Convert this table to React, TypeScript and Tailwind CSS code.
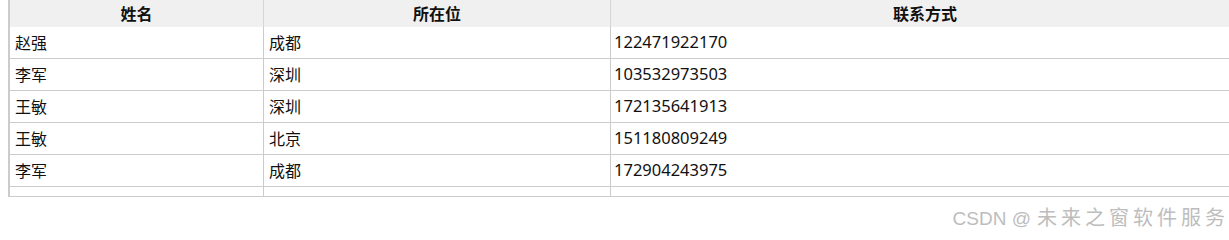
const rows = [
  { name: '赵强', city: '成都', phone: '122471922170' },
  { name: '李军', city: '深圳', phone: '103532973503' },
  { name: '王敏', city: '深圳', phone: '172135641913' },
  { name: '王敏', city: '北京', phone: '151180809249' },
  { name: '李军', city: '成都', phone: '172904243975' },
];

const font = 'font-["Noto_Sans","Noto_Sans_CJK_SC",sans-serif]';

export default function App() {
  return (
    <div className={`relative h-[240px] w-[1229px] overflow-hidden bg-white text-[16px] text-[#111] ${font}`}>
      <div className="ml-2 w-[1260px] border-b border-l-2 border-[#cccccc]">
        {/* header */}
        <div className="flex h-[27px] items-center bg-[#f0f0f0] font-semibold">
          <div className="flex h-full w-[254px] items-center justify-center border-r border-[#d6d6d6]">姓名</div>
          <div className="flex h-full w-[347px] items-center justify-center border-r border-[#d6d6d6]">所在位</div>
          <div className="flex h-full w-[628px] items-center justify-center">联系方式</div>
        </div>
        {rows.map((r, i) => (
          <div key={i} className="flex h-[32px] border-b border-[#cccccc]">
            <div className="flex w-[254px] items-center border-r border-[#cccccc] px-[5px]">{r.name}</div>
            <div className="flex w-[347px] items-center border-r border-[#cccccc] px-[5px]">{r.city}</div>
            <div className="flex flex-1 items-center px-[3px] text-[16.5px]">{r.phone}</div>
          </div>
        ))}
        <div className="flex h-[9px]">
          <div className="w-[254px] border-r border-[#cccccc]" />
          <div className="w-[347px] border-r border-[#cccccc]" />
          <div className="flex-1" />
        </div>
      </div>
      <div className="absolute right-0 top-[205px] flex items-baseline leading-[26px] text-[#bdbdbd] [text-shadow:1px_1px_1px_#ffffff]">
        <span className="text-[19px] font-['Liberation_Sans',sans-serif]">CSDN @</span>
        <span className="ml-[6px] text-[20px] tracking-[4px]">未来之窗软件服务</span>
      </div>
    </div>
  );
}
